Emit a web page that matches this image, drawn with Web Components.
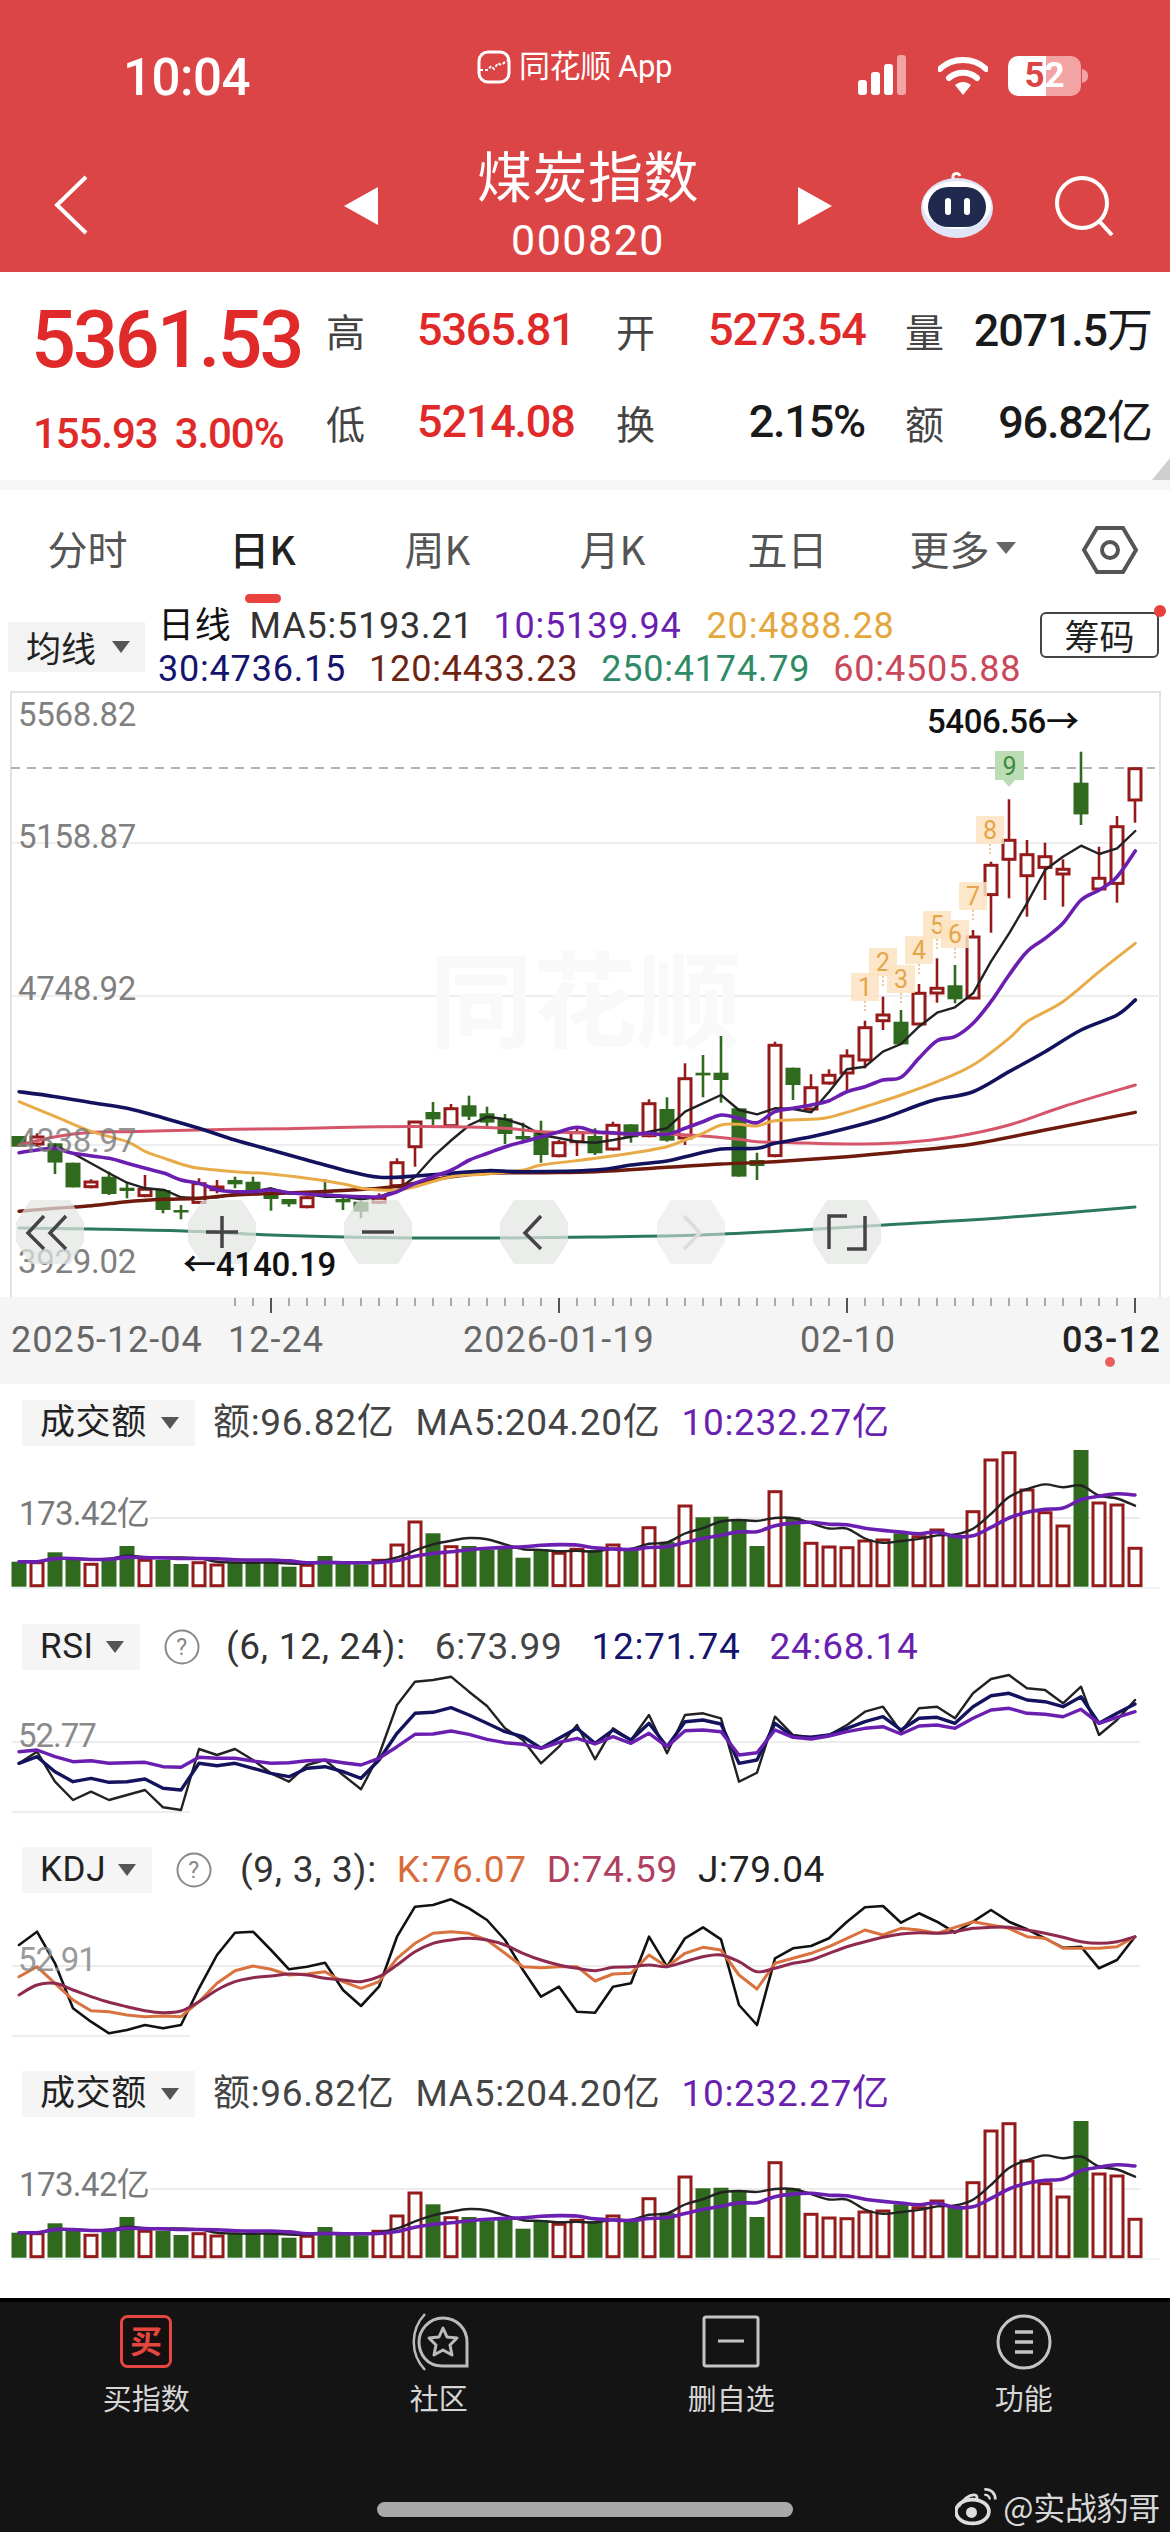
<!DOCTYPE html>
<html lang="zh">
<head>
<meta charset="utf-8">
<title>煤炭指数</title>
<style>
html,body{margin:0;padding:0;background:#fff}
body{width:1170px;height:2532px;overflow:hidden;font-family:Roboto,"Noto Sans CJK SC",sans-serif;color:#222}
</style>
</head>
<body>
<stock-header></stock-header>
<quote-panel></quote-panel>
<period-tabs></period-tabs>
<ma-legend></ma-legend>
<kline-chart></kline-chart>
<date-axis></date-axis>
<chart-pane pad="16" extra="0">
  <pane-head label="成交额" width="173">
    <span style="color:#444;margin-left:18px">额:96.82亿</span><span style="color:#444;margin-left:21px">MA5:204.20亿</span><span style="color:#6a1fb0;margin-left:21px">10:232.27亿</span>
  </pane-head>
  <volume-chart origin="1446"></volume-chart>
</chart-pane>
<chart-pane pad="24" extra="0">
  <pane-head label="RSI" width="118" help="1">
    <span style="color:#333;margin-left:26px">(6, 12, 24):</span><span style="color:#444;margin-left:29px">6:73.99</span><span style="color:#14146e;margin-left:29px">12:71.74</span><span style="color:#6a1fb0;margin-left:29px">24:68.14</span>
  </pane-head>
  <line-chart kind="rsi" origin="1670" h="152"></line-chart>
</chart-pane>
<chart-pane pad="25" extra="0">
  <pane-head label="KDJ" width="130" help="1">
    <span style="color:#333;margin-left:28px">(9, 3, 3):</span><span style="color:#d96b3a;margin-left:20px">K:76.07</span><span style="color:#b0405f;margin-left:20px">D:74.59</span><span style="color:#222;margin-left:20px">J:79.04</span>
  </pane-head>
  <line-chart kind="kdj" origin="1893" h="162"></line-chart>
</chart-pane>
<chart-pane pad="16" extra="27">
  <pane-head label="成交额" width="173">
    <span style="color:#444;margin-left:18px">额:96.82亿</span><span style="color:#444;margin-left:21px">MA5:204.20亿</span><span style="color:#6a1fb0;margin-left:21px">10:232.27亿</span>
  </pane-head>
  <volume-chart origin="1446"></volume-chart>
</chart-pane>
<bottom-bar></bottom-bar>
<script>
const CX=i=>19+18*i;
const z4=(x,y)=>[x/2.613,1000+y/3];
const z3=(x,y)=>[600+x/2.75,680+y/3];
const pts=(a,f)=>a.map(p=>f(p[0],p[1]));
const fmt=a=>a.map(p=>p[0].toFixed(1)+','+p[1].toFixed(1)).join(' ');
function smooth(p){
  let d='M'+p[0][0].toFixed(1)+' '+p[0][1].toFixed(1);
  for(let i=0;i<p.length-1;i++){
    const a=p[Math.max(0,i-1)],b=p[i],c=p[i+1],e=p[Math.min(p.length-1,i+2)];
    d+=` C${(b[0]+(c[0]-a[0])/6).toFixed(1)} ${(b[1]+(c[1]-a[1])/6).toFixed(1)} ${(c[0]-(e[0]-b[0])/6).toFixed(1)} ${(c[1]-(e[1]-b[1])/6).toFixed(1)} ${c[0].toFixed(1)} ${c[1].toFixed(1)}`;
  }
  return d;
}
const linePath=(p,c,w)=>`<path d="${smooth(p)}" fill="none" stroke="${c}" stroke-width="${w}" stroke-linejoin="round" stroke-linecap="round"/>`;
const polyLine=(p,c,w)=>`<polyline points="${fmt(p)}" fill="none" stroke="${c}" stroke-width="${w}" stroke-linejoin="round" stroke-linecap="round"/>`;
const GREEN='#2f6a1f',RED='#951b1b';

class StockHeader extends HTMLElement{
  constructor(){super();this.attachShadow({mode:'open'}).innerHTML=`
  <style>
  :host{display:block;height:272px;background:#dc4545;color:#fff;box-sizing:border-box;padding-top:50px;overflow:hidden}
  .status{display:flex;height:56px;align-items:center}
  .time{margin-left:123px;width:340px;font:500 51px/56px Roboto,sans-serif;letter-spacing:-.5px;color:#fff}
  .app{display:flex;align-items:center;width:222px;height:40px;margin-top:-22px;font:400 31px/40px Roboto,"Noto Sans CJK SC",sans-serif;color:#fff;white-space:nowrap;letter-spacing:-.4px}
  .app svg{margin:0 8px 0 14px;flex:none}
  .right{display:flex;align-items:center;margin-left:173px;margin-top:-4px}
  .bat{display:flex;width:73px;height:40px;border-radius:10px;background:linear-gradient(90deg,#fff 0 52%,#f2a3a3 52% 100%);font:700 35px/40px Roboto,sans-serif;justify-content:center;margin-left:20px}
  .bat b{color:#dc4545;font-weight:700}.bat i{color:#fff;font-style:normal}
  .nav{display:flex;align-items:flex-start;margin-top:36px;position:relative}
  .back{margin:33px 0 0 54px;flex:none}
  .tl{margin:45px 0 0 256px;flex:none}
  .mid{width:420px;text-align:center;flex:none;color:#fff}
  .name{font:400 55px/64px "Noto Sans CJK SC",sans-serif;letter-spacing:.5px;margin-top:-1px}
  .code{font:400 43px/48px Roboto,sans-serif;letter-spacing:1.5px;margin-top:11px;color:#fff}
  .tr{margin:45px 0 0 0;flex:none}
  .robot{margin:29px 0 0 88px;flex:none}
  .search{margin:34px 0 0 60px;flex:none}
  </style>
  <div class="status">
    <div class="time">10:04</div>
    <div class="app">
      <svg width="34" height="34" viewBox="0 0 34 34"><rect x="2" y="2" width="30" height="30" rx="9" fill="#dc4545" stroke="#fff" stroke-width="3"/><path d="M3 20h8l3-4 3 3 4-6 3 2 7-5" fill="none" stroke="#fff" stroke-width="2" stroke-dasharray="3 2"/></svg>
      <span>同花顺 App</span>
    </div>
    <div class="right">
      <svg width="58" height="42" viewBox="0 0 58 42"><rect x="0" y="25" width="9" height="15" rx="3" fill="#fff"/><rect x="13" y="17" width="9" height="23" rx="3" fill="#fff"/><rect x="26" y="9" width="9" height="31" rx="3" fill="#fff"/><rect x="39" y="0" width="9" height="40" rx="3" fill="#f2a3a3"/></svg>
      <svg width="50" height="42" viewBox="0 0 50 42" style="margin-left:22px"><path d="M2 14C14 2 36 2 48 14" fill="none" stroke="#fff" stroke-width="6" stroke-linecap="round"/><path d="M11 23c8-7 20-7 28 0" fill="none" stroke="#fff" stroke-width="6" stroke-linecap="round"/><path d="M17 30c5-4 11-4 16 0l-8 10z" fill="#fff"/></svg>
      <div class="bat"><b>5</b><i>2</i></div>
      <svg width="7" height="16" viewBox="0 0 7 16" style="margin-left:1px"><path d="M0 1c4 1 6 3 6 7s-2 6-6 7z" fill="#f2a3a3"/></svg>
    </div>
  </div>
  <div class="nav">
    <svg class="back" width="34" height="60" viewBox="0 0 34 60"><path d="M32 2 3 30l29 28" fill="none" stroke="#fff" stroke-width="4"/></svg>
    <svg class="tl" width="34" height="38" viewBox="0 0 34 38"><path d="M34 0v38L0 19z" fill="#fff"/></svg>
    <div class="mid"><div class="name">煤炭指数</div><div class="code">000820</div></div>
    <svg class="tr" width="34" height="38" viewBox="0 0 34 38"><path d="M0 0v38l34-19z" fill="#fff"/></svg>
    <svg class="robot" width="74" height="68" viewBox="0 0 74 68">
      <path d="M34 9c-4-6 4-9 6-4" fill="none" stroke="#fff" stroke-width="3"/>
      <ellipse cx="37" cy="37" rx="36" ry="30" fill="#dfe4f7"/>
      <ellipse cx="37" cy="34" rx="34" ry="24" fill="#fff"/>
      <rect x="8" y="16" width="58" height="40" rx="20" fill="#1f2a4e"/>
      <rect x="25" y="27" width="6" height="17" rx="3" fill="#fff"/><rect x="44" y="27" width="6" height="17" rx="3" fill="#fff"/>
    </svg>
    <svg class="search" width="62" height="60" viewBox="0 0 62 60"><circle cx="28" cy="27" r="25" fill="none" stroke="#fff" stroke-width="4"/><path d="M46 46l12 13" stroke="#fff" stroke-width="4" fill="none"/></svg>
  </div>`;}
}
class QuotePanel extends HTMLElement{
  constructor(){super();this.attachShadow({mode:'open'}).innerHTML=`
  <style>
  :host{display:block;position:relative;height:218px;box-sizing:border-box;padding-top:12px;background:linear-gradient(#fff 0 208px,#f6f6f6 208px)}
  .g{display:grid;grid-template-columns:326px 91px 199px 92px 157px 40px 68px 180px;grid-template-rows:92px 92px;align-items:center;white-space:nowrap}
  .lab{font:400 39px/46px "Noto Sans CJK SC",sans-serif;color:#444}
  .v{font:500 45px/50px Roboto,"Noto Sans CJK SC",sans-serif;letter-spacing:-1.2px}
  .r{color:#e02a2a}.k{color:#1a1a1a}.ra{text-align:right}
  .price{font:500 79px/80px Roboto,sans-serif;letter-spacing:-3px;color:#e02a2a;padding-left:31px;margin-top:20px}
  .sub{font:500 42px/46px Roboto,sans-serif;color:#e02a2a;padding-left:33px;margin-top:24px;letter-spacing:-1.1px;word-spacing:8px}
  .cn{font-size:46px;letter-spacing:0;font-weight:400}
  .tri{position:absolute;right:0;bottom:10px;width:0;height:0;border-left:18px solid transparent;border-bottom:22px solid #cfcfcf}
  </style>
  <div class="g">
    <div class="price">5361.53</div><div class="lab">高</div><div class="v r">5365.81</div><div class="lab">开</div><div class="v r ra">5273.54</div><div></div><div class="lab">量</div><div class="v k ra">2071.5<span class="cn">万</span></div>
    <div class="sub">155.93 3.00%</div><div class="lab">低</div><div class="v r">5214.08</div><div class="lab">换</div><div class="v k ra">2.15%</div><div></div><div class="lab">额</div><div class="v k ra">96.82<span class="cn">亿</span></div>
  </div>
  <div class="tri"></div>`;}
}
class PeriodTabs extends HTMLElement{
  constructor(){super();this.attachShadow({mode:'open'}).innerHTML=`
  <style>
  :host{display:grid;grid-template-columns:repeat(6,175px) 1fr;height:115px;box-sizing:border-box;padding-top:33px;background:#fff}
  .t{display:flex;flex-direction:column;align-items:center;font:400 40px/50px "Noto Sans CJK SC",Roboto,sans-serif;color:#555}
  .t.a{color:#222;font-weight:500}
  .t.a::after{content:"";width:36px;height:9px;border-radius:5px;background:#e8413e;margin-top:21px}
  .more{display:flex;align-items:center;gap:6px}
  .more i{width:0;height:0;border:10px solid transparent;border-top:12px solid #666;border-bottom:0}
  svg{justify-self:center;margin-top:2px}
  </style>
  <div class="t">分时</div><div class="t a">日K</div><div class="t">周K</div><div class="t">月K</div><div class="t">五日</div><div class="t"><span class="more">更多<i></i></span></div>
  <svg width="56" height="50" viewBox="0 0 56 50"><path d="M15 3h26l13 22-13 22H15L2 25z" fill="none" stroke="#555" stroke-width="4"/><circle cx="28" cy="25" r="8" fill="none" stroke="#555" stroke-width="4"/></svg>`;}
}
class MaLegend extends HTMLElement{
  constructor(){super();this.attachShadow({mode:'open'}).innerHTML=`
  <style>
  :host{display:flex;height:85px;position:relative;background:#fff;white-space:nowrap}
  .box{display:flex;align-items:center;width:137px;height:50px;margin:17px 13px 0 8px;box-sizing:border-box;padding-left:18px;background:#f3f3f3;font:400 35px/50px "Noto Sans CJK SC",sans-serif;color:#222}
  .box i{width:0;height:0;border:9px solid transparent;border-top:12px solid #555;border-bottom:0;margin-left:16px}
  .ls{flex:none;width:880px;font:400 36px/43px Roboto,"Noto Sans CJK SC",sans-serif;letter-spacing:.8px}
  .ls span{margin-right:23px}
  .btn{position:absolute;left:1040px;top:7px;width:119px;height:46px;box-sizing:border-box;border:2px solid #444;border-radius:6px;text-align:center;font:400 35px/41px "Noto Sans CJK SC",sans-serif;color:#222;background:#fff}
  .dot{position:absolute;left:1154px;top:0;width:12px;height:12px;border-radius:50%;background:#e8413e}
  </style>
  <div class="box">均线<i></i></div>
  <div class="ls">
    <div><span style="color:#111;margin-right:18px">日线</span><span style="color:#333;margin-right:20px">MA5:5193.21</span><span style="color:#6a1fb0;margin-right:25px">10:5139.94</span><span style="color:#e4a73c">20:4888.28</span></div>
    <div><span style="color:#14146e">30:4736.15</span><span style="color:#6e2410">120:4433.23</span><span style="color:#2f8a66">250:4174.79</span><span style="color:#c9485c">60:4505.88</span></div>
  </div>
  <div class="btn">筹码</div><div class="dot"></div>`;}
}
const CAND=[
[408,440,408,440,'g'],[408,435,400,440,'r'],[430,488,430,522,'g'],[488,562,488,562,'g'],[543,563,538,565,'r'],[530,582,515,585,'g'],[563,573,545,595,'g'],[565,590,525,592,'r'],[570,630,570,640,'g'],[630,635,615,658,'g'],
[548,610,535,612,'r'],[558,572,540,580,'r'],[540,553,530,565,'g'],[545,570,530,575,'g'],[575,597,565,632,'g'],[597,613,597,620,'g'],[590,623,588,625,'r'],[570,580,538,582,'g'],[597,607,590,630,'g'],[605,635,600,655,'g'],
[592,610,580,612,'r'],[485,560,475,565,'r'],[363,443,363,500,'r'],[336,358,306,375,'g'],[323,380,312,382,'r'],[316,350,287,360,'g'],[340,368,320,378,'g'],[355,402,342,432,'g'],[408,418,368,425,'g'],[398,465,362,488,'g'],
[425,470,420,472,'r'],[395,428,385,468,'r'],[408,460,385,465,'g'],
[1333,1410,1325,1412,'r'],[1333,1372,1333,1388,'g'],[1268,1370,1258,1372,'r'],[1287,1382,1252,1385,'g'],[1193,1377,1150,1395,'r'],[1178,1186,1125,1252,'g'],[1178,1200,1068,1268,'g'],[1285,1490,1285,1490,'g'],[1440,1458,1418,1500,'g'],
[1093,1430,1085,1432,'r'],[1163,1215,1163,1260,'g'],[1220,1290,1183,1292,'r'],[1183,1212,1168,1214,'r'],[1125,1182,1108,1230,'r'],[1040,1143,1022,1165,'r'],[1002,1025,950,1050,'r'],[1025,1093,990,1095,'g'],[937,1035,912,1036,'r'],
[922,942,835,968,'r'],[916,958,855,970,'g'],[768,957,750,958,'r'],[553,647,545,758,'r'],[478,541,358,655,'r'],[521,590,480,710,'r'],[527,565,488,660,'r'],[565,585,538,680,'r'],[308,403,215,435,'g'],[592,630,500,632,'r'],[437,613,408,668,'r'],[263,363,263,428,'r']];
const MA5=pts([[145,438],[190,460],[285,520],[332,548],[380,565],[430,570],[473,592],[520,595],[570,592],[614,582],[661,575],[708,565],[755,580],[802,582],[850,590],[897,590],[944,598],[991,590],[1038,570],[1085,530],[1132,470],[1180,420],[1227,375],[1274,350],[1321,358],[1368,375],[1415,405],[1462,415],[1509,425],[1556,428]],z4).concat(pts([[36,1380],[85,1370],[135,1355],[184,1345],[234,1295],[283,1270],[333,1245],[382,1290],[432,1303],[481,1285],[531,1287],[581,1297],[630,1235],[679,1168],[729,1160],[778,1115],[828,1092],[877,1040],[927,998],[976,982],[1026,940],[1075,845],[1125,760],[1174,670],[1224,570],[1273,530],[1323,497],[1373,522],[1422,505],[1472,453]],z3));
const MA10=pts([[50,458],[97,450],[144,445],[190,460],[285,475],[332,490],[380,505],[430,520],[473,540],[520,550],[570,570],[614,575],[661,575],[708,570],[755,578],[802,582],[850,585],[897,588],[944,590],[991,590],[1038,575],[1085,550],[1132,530],[1180,510],[1227,480],[1274,460],[1321,440],[1368,425],[1415,410],[1462,395],[1509,382],[1556,395]],z4).concat(pts([[36,1358],[85,1362],[135,1360],[184,1363],[234,1345],[283,1325],[333,1305],[382,1315],[432,1328],[481,1295],[531,1285],[581,1275],[630,1262],[679,1235],[729,1220],[778,1200],[828,1192],[877,1135],[927,1082],[976,1070],[1026,1030],[1075,965],[1125,885],[1174,815],[1224,775],[1273,730],[1323,660],[1373,630],[1422,590],[1472,513]],z3));
const MA20=pts([[50,305],[145,350],[240,395],[332,425],[380,455],[430,475],[473,492],[520,505],[614,515],[708,522],[802,535],[897,552],[944,565],[991,570],[1038,570],[1085,560],[1180,530],[1274,522],[1368,510],[1415,495],[1556,475]],z4).concat(pts([[85,1420],[184,1400],[234,1380],[283,1360],[333,1335],[382,1333],[432,1338],[481,1322],[581,1318],[630,1312],[729,1280],[828,1245],[927,1205],[1026,1155],[1125,1075],[1174,1025],[1273,965],[1373,875],[1472,790]],z3));
const MA30=pts([[50,275],[145,290],[240,308],[332,325],[430,355],[520,385],[614,420],[708,450],[802,480],[897,510],[991,532],[1085,528],[1180,520],[1274,512],[1368,515],[1556,510]],z4).concat(pts([[85,1455],[184,1443],[234,1430],[333,1407],[432,1405],[481,1390],[581,1370],[679,1345],[778,1315],[877,1275],[927,1258],[1026,1235],[1125,1175],[1224,1115],[1323,1050],[1422,1005],[1472,960]],z3));
const MA60=pts([[50,435],[145,410],[240,397],[332,395],[430,392],[614,388],[802,385],[991,380],[1180,380],[1321,385],[1415,395],[1556,398]],z4).concat(pts([[85,1362],[184,1362],[283,1368],[382,1378],[432,1385],[531,1388],[679,1392],[828,1388],[976,1370],[1125,1335],[1273,1280],[1472,1215]],z3));
const MA120=pts([[50,634],[145,625],[240,617],[332,605],[430,598],[520,595],[614,585],[802,577],[991,565],[1085,550],[1180,530],[1274,520],[1415,518],[1556,515]],z4).concat(pts([[184,1462],[333,1452],[481,1445],[679,1430],[828,1415],[1026,1392],[1224,1350],[1472,1297]],z3));
const MA250=[[19,1228],[92,1229],[184,1231],[271,1235],[343,1237],[413,1238],[497,1238],[595,1237],[700,1235],[800,1230],[900,1224],[1000,1218],[1135,1207]];
const BADGES=[[1,851,973],[2,869,948],[3,887,965],[4,905,936],[5,923,911],[6,941,920],[7,959,882],[8,976,816]];
class KlineChart extends HTMLElement{
  constructor(){super();
    let c='';
    CAND.forEach((d,i)=>{const f=i<33?(y=>1000+y/3):(y=>680+y/3);const x=CX(i);const col=d[4]=='r'?RED:GREEN;
      const t=f(d[0]),b=f(d[1]),wt=f(d[2]),wb=f(d[3]);
      c+=`<path d="M${x} ${wt.toFixed(1)}V${wb.toFixed(1)}" stroke="${col}" stroke-width="2.6"/>`;
      if(d[4]=='r')c+=`<rect x="${x-6}" y="${(t+1).toFixed(1)}" width="12" height="${Math.max(1,b-t-2).toFixed(1)}" fill="#fff" stroke="${col}" stroke-width="3"/>`;
      else c+=`<rect x="${x-7.5}" y="${t.toFixed(1)}" width="15" height="${Math.max(2.5,b-t).toFixed(1)}" fill="${col}"/>`;
    });
    let bd='';
    BADGES.forEach(([n,x,y])=>{bd+=`<rect x="${x}" y="${y}" width="28" height="28" fill="#fbe3c2" opacity=".85"/><path d="M${x+14} ${y+28}V${y+40}" stroke="#e8c9a0" stroke-dasharray="2 2" stroke-width="2"/><text x="${x+14}" y="${y+23}" text-anchor="middle" font-size="25" fill="#e5a54a">${n}</text>`;});
    bd+=`<rect x="995" y="751" width="29" height="29" fill="#bcdcb6"/><path d="M1003 780l6 7 6-7z" fill="#bcdcb6"/><text x="1009.5" y="775" text-anchor="middle" font-size="25" fill="#3c8a3c">9</text>`;
    const gl=y=>`<line x1="11" x2="1160" y1="${y}" y2="${y}" stroke="#eeeeee" stroke-width="2"/>`;
    const lab=(t,y)=>`<text x="18" y="${y}" font-size="33" fill="#808080" letter-spacing="-.3">${t}</text>`;
    const btn=(x,icon,f)=>`<path d="M${x-34} ${1222}L${x-20} ${1200}L${x+20} ${1200}L${x+34} ${1222}V${1242}L${x+20} ${1264}L${x-20} ${1264}L${x-34} ${1242}Z" fill="#e3e6e3" opacity="${f||.72}"/>${icon}`;
    const st='fill="none" stroke="#444" stroke-width="3.5"';
    this.attachShadow({mode:'open'}).innerHTML=`
    <style>:host{display:block;height:607px;background:#fff}svg{display:block;font-family:Roboto,"Noto Sans CJK SC",sans-serif}</style>
    <svg width="1170" height="607" viewBox="0 690 1170 607">
      <path d="M11 1297V692H1160V1297" fill="none" stroke="#e2e2e2" stroke-width="2"/>
      ${gl(843)}${gl(996)}${gl(1145)}
      <line x1="11" x2="1155" y1="768" y2="768" stroke="#9a9a9a" stroke-width="1.5" stroke-dasharray="9 7"/>
      <text x="585" y="1040" text-anchor="middle" font-size="104" font-weight="700" fill="#f9f9f9">同花顺</text>
      ${c}
      ${polyLine(MA5,'#222',2.4)}
      ${linePath(MA250,'#2b7a5c',3)}
      ${linePath(MA120,'#6e1a0c',3.4)}
      ${linePath(MA60,'#d5566a',3)}
      ${linePath(MA20,'#e9ab48',3)}
      ${linePath(MA30,'#12125e',3.6)}
      ${linePath(MA10,'#6a1fb0',3.6)}
      ${bd}
      ${lab('5568.82',726)}${lab('5158.87',848)}${lab('4748.92',1000)}
      <text x="18" y="1152" font-size="33" fill="#7a7a7a" opacity=".8" letter-spacing="-.3">4338.97</text>
      ${lab('3929.02',1273)}
      <text x="927" y="733" font-size="33" font-weight="500" fill="#111" letter-spacing="-.4">5406.56→</text>
      ${btn(50,`<path d="M44 1216l-16 17 16 16M66 1216l-16 17 16 16" ${st}/>`)}
      ${btn(222,`<path d="M222 1216v32M206 1232h32" ${st}/>`)}
      ${btn(378,`<path d="M362 1232h32" ${st}/>`)}
      ${btn(534,`<path d="M541 1216l-16 17 16 16" ${st}/>`)}
      ${btn(691,`<path d="M684 1216l16 17-16 16" fill="none" stroke="#dcdcdc" stroke-width="3.5"/>`,.55)}
      ${btn(847,`<path d="M829 1249v-33h18M865 1216v33h-18" ${st}/>`,.72)}
      <text x="183" y="1276" font-size="33" font-weight="500" fill="#111" letter-spacing="-.2">←4140.19</text>
    </svg>`;
  }
}
class DateAxis extends HTMLElement{
  constructor(){super();
    let t='';
    for(let i=12;i<=62;i++){const big=(i-14)%16==0;const x=CX(i);t+=`<line x1="${x}" x2="${x}" y1="1298" y2="${big?1313:1306}" stroke="${big?'#555':'#aaa'}" stroke-width="2"/>`;}
    const d=(s,x,c,w)=>`<text x="${x}" y="1352" font-size="36" fill="${c||'#666'}" ${w?'font-weight="500"':''} letter-spacing="1">${s}</text>`;
    this.attachShadow({mode:'open'}).innerHTML=`
    <style>:host{display:block;height:87px;background:#f5f5f5}svg{display:block;font-family:Roboto,sans-serif}</style>
    <svg width="1170" height="87" viewBox="0 1297 1170 87">${t}
      ${d('2025-12-04',11)}${d('12-24',228)}${d('2026-01-19',463)}${d('02-10',800)}${d('03-12',1062,'#222',1)}
      <circle cx="1110" cy="1362" r="5" fill="#e8605c"/>
    </svg>`;
  }
}
class ChartPane extends HTMLElement{
  constructor(){super();this.attachShadow({mode:'open'}).innerHTML=`<style>:host{display:block;background:#fff}</style><slot></slot>`;}
  connectedCallback(){this.style.paddingTop=(this.getAttribute('pad')||0)+'px';this.style.paddingBottom=(this.getAttribute('extra')||0)+'px';}
}
class PaneHead extends HTMLElement{
  constructor(){super();
    const help=this.getAttribute('help');
    this.attachShadow({mode:'open'}).innerHTML=`
    <style>
    :host{display:flex;align-items:center;height:46px;white-space:nowrap;font:400 37px/46px Roboto,"Noto Sans CJK SC",sans-serif;letter-spacing:.7px}
    .box{display:flex;align-items:center;justify-content:space-between;box-sizing:border-box;width:${this.getAttribute('width')}px;height:46px;margin-left:22px;padding:0 16px 0 18px;background:#f5f5f5;color:#222;flex:none;font-size:35px;letter-spacing:.6px}
    .box i{width:0;height:0;border:9px solid transparent;border-top:12px solid #555;border-bottom:0}
    svg{margin-left:24px;flex:none}
    </style>
    <div class="box"><span>${this.getAttribute('label')}</span><i></i></div>
    ${help?`<svg width="36" height="36" viewBox="0 0 36 36"><circle cx="18" cy="18" r="16.5" fill="none" stroke="#888" stroke-width="2"/><text x="18" y="26" text-anchor="middle" font-size="23" fill="#888" font-family="Roboto">?</text></svg>`:''}
    <slot></slot>`;
  }
}
const VOL=[[545,'g'],[545,'r'],[517,'g'],[535,'g'],[550,'r'],[535,'g'],[498,'g'],[538,'r'],[540,'g'],[552,'g'],[545,'r'],[552,'r'],[548,'g'],[545,'g'],[548,'g'],[560,'g'],[553,'r'],[528,'g'],[550,'g'],[553,'g'],[538,'r'],[492,'r'],[423,'r'],[460,'g'],[497,'r'],[498,'g'],[510,'g'],[500,'g'],[533,'g'],[508,'g'],[517,'r'],[505,'r'],[510,'g'],[492,'r'],[510,'g'],[440,'r'],[485,'g'],[375,'r'],[412,'g'],[410,'g'],[418,'g'],[498,'g'],[332,'r'],[412,'g'],[487,'r'],[498,'r'],[500,'r'],[480,'r'],[477,'r'],[460,'g'],[467,'r'],[447,'r'],[465,'g'],[392,'r'],[237,'r'],[215,'r'],[327,'r'],[395,'r'],[435,'r'],[210,'g'],[366,'r'],[372,'r'],[502,'r']];
class VolumeChart extends HTMLElement{
  constructor(){super();
    const Y=z=>1380+z/3;
    let b='';
    VOL.forEach(([t,k],i)=>{const x=CX(i);
      b+=k=='g'?`<rect x="${x-7.5}" y="${Y(t).toFixed(1)}" width="15" height="${(Y(620)-Y(t)).toFixed(1)}" fill="${GREEN}"/>`
              :`<rect x="${x-6}" y="${(Y(t)+1).toFixed(1)}" width="12" height="${(Y(620)-Y(t)-2).toFixed(1)}" fill="#fff" stroke="${RED}" stroke-width="3"/>`;});
    const ma=n=>VOL.map((_,i)=>{let s=0,c=0;for(let j=Math.max(0,i-n+1);j<=i;j++){s+=VOL[j][0];c++;}return [CX(i),Y(s/c)];});
    this.attachShadow({mode:'open'}).innerHTML=`
    <style>:host{display:block;height:154px}svg{display:block;font-family:Roboto,"Noto Sans CJK SC",sans-serif}</style>
    <svg width="1170" height="154" viewBox="0 1446 1170 154">
      <line x1="150" x2="1140" y1="1518" y2="1518" stroke="#ececec" stroke-width="2"/>
      <line x1="12" x2="1160" y1="1588" y2="1588" stroke="#eef4f4" stroke-width="2"/>
      ${b}
      ${linePath(ma(5),'#222',2.4)}
      ${linePath(ma(10),'#6a1fb0',3.6)}
      <text x="19" y="1525" font-size="33" fill="#7a7a7a" letter-spacing="-.6">173.42亿</text>
    </svg>`;
  }
}
const RSI={
 a:[490,455,545,600,575,600,585,570,622,630,447,465,447,480,520,545,495,480,525,568,465,315,245,240,230,275,318,385,420,490,440,375,478,385,420,345,460,345,340,355,545,518,350,405,412,405,375,335,320,395,325,320,355,280,237,225,265,270,310,260,405,360,300],
 b:[490,470,515,545,535,547,545,537,565,570,490,497,490,505,520,530,505,500,515,535,480,400,340,337,323,345,370,395,410,445,415,385,430,390,420,370,440,365,360,372,490,480,370,410,412,405,385,365,350,390,355,352,370,320,287,280,300,305,320,290,370,340,312],
 c:[455,450,470,485,482,490,488,487,500,502,472,475,475,483,490,488,482,480,488,495,475,440,403,402,393,403,418,428,433,445,427,415,432,410,430,400,440,392,390,395,465,458,390,412,417,408,395,385,380,402,378,375,385,355,330,325,340,343,350,328,370,352,335]};
const KDJ={
 j:[1035,995,1090,1225,1265,1300,1290,1275,1285,1275,1165,1065,998,995,1050,1108,1100,1088,1170,1218,1160,1010,920,915,898,925,960,1020,1110,1190,1160,1235,1238,1160,1150,1010,1100,1015,982,1018,1215,1275,1075,1045,1038,1015,965,922,918,968,940,965,998,965,930,965,988,1015,1043,1040,1105,1080,1010],
 k:[1130,1100,1150,1200,1232,1235,1245,1250,1248,1250,1205,1150,1112,1098,1108,1125,1122,1115,1145,1165,1145,1075,1030,1000,995,1000,1020,1060,1100,1103,1100,1100,1143,1122,1120,1065,1100,1060,1042,1050,1125,1167,1090,1075,1060,1040,1015,990,1005,985,990,1000,982,965,975,985,1010,1015,1045,1045,1045,1040,1010],
 d:[1185,1155,1150,1170,1190,1207,1220,1232,1238,1233,1205,1170,1145,1133,1128,1122,1125,1135,1140,1145,1130,1095,1055,1030,1020,1015,1020,1035,1060,1080,1095,1105,1112,1102,1100,1095,1100,1085,1070,1065,1085,1115,1105,1090,1080,1060,1040,1025,1012,1002,998,1000,995,985,982,982,990,1000,1012,1025,1030,1025,1010]};
class LineChart extends HTMLElement{
  constructor(){super();
    const kind=this.getAttribute('kind'),o=+this.getAttribute('origin'),h=+this.getAttribute('h');
    const P=a=>a.map((z,i)=>[CX(i),1600+z/3]);
    let body;
    const line=(y,a,b)=>`<line x1="${a||12}" x2="${b||1140}" y1="${y}" y2="${y}" stroke="#ededed" stroke-width="2"/>`;
    if(kind=='rsi'){
      body=line(1742)+line(1812,12,190)+
        polyLine(P(RSI.a),'#222',2.4)+polyLine(P(RSI.b),'#14145e',3.4)+polyLine(P(RSI.c),'#6a1fb0',3.4)+
        `<text x="18" y="1747" font-size="33" fill="#8a8a8a" letter-spacing="-1">52.77</text>`;
    }else{
      body=line(1966)+line(2036,12,190)+
        polyLine(P(KDJ.j),'#111',2.6)+polyLine(P(KDJ.k),'#d9723f',3)+linePath(P(KDJ.d),'#8e2a4f',3)+
        `<text x="18" y="1971" font-size="33" fill="#8a8a8a" opacity=".85" letter-spacing="-1">52.91</text>`;
    }
    this.attachShadow({mode:'open'}).innerHTML=`
    <style>:host{display:block;height:${h}px}svg{display:block;font-family:Roboto,sans-serif}</style>
    <svg width="1170" height="${h}" viewBox="0 ${o} 1170 ${h}">${body}</svg>`;
  }
}
class BottomBar extends HTMLElement{
  constructor(){super();this.attachShadow({mode:'open'}).innerHTML=`
  <style>
  :host{display:block;position:relative;height:234px;box-sizing:border-box;background:#141414;border-top:4px solid #000;color:#ddd}
  .row{display:grid;grid-template-columns:repeat(4,292.5px);padding-top:11px}
  .it{display:flex;flex-direction:column;align-items:center;font:400 29px/38px "Noto Sans CJK SC",sans-serif;color:#d6d6d6}
  .it svg{display:block;height:58px;margin-bottom:7px}
  .home{width:416px;height:15px;border-radius:8px;background:#a9a9a9;margin:86px 0 0 377px}
  .wm{position:absolute;right:10px;top:184px;display:flex;align-items:center;font:400 32px/40px "Noto Sans CJK SC",sans-serif;color:#d8d8d8;letter-spacing:-.3px}
  </style>
  <div class="row">
    <div class="it"><svg width="54" height="58" viewBox="0 0 54 58"><rect x="2.5" y="3.5" width="49" height="50" rx="6" fill="#161010" stroke="#e5463f" stroke-width="3"/><text x="27" y="40" text-anchor="middle" font-size="32" font-weight="700" font-family="Noto Sans CJK SC" fill="#e5463f">买</text></svg><span>买指数</span></div>
    <div class="it"><svg width="64" height="58" viewBox="0 0 64 58"><path d="M18 1C3 17 3 41 18 57" fill="none" stroke="#bbb" stroke-width="2.5"/><path d="M60 53H35C20 53 12 41 12 29S22 5 36 5s24 11 24 24z" fill="none" stroke="#bbb" stroke-width="3"/><path d="M36 15l4 9 10 1-7 7 2 10-9-5-9 5 2-10-7-7 10-1z" fill="none" stroke="#bbb" stroke-width="3" stroke-linejoin="round"/></svg><span>社区</span></div>
    <div class="it"><svg width="58" height="58" viewBox="0 0 58 58"><rect x="2" y="4" width="54" height="49" rx="2" fill="none" stroke="#c4c4c4" stroke-width="3"/><path d="M16 28h26" stroke="#c4c4c4" stroke-width="3"/></svg><span>删自选</span></div>
    <div class="it"><svg width="58" height="58" viewBox="0 0 58 58"><ellipse cx="29" cy="29" rx="26" ry="26" fill="none" stroke="#c4c4c4" stroke-width="3"/><path d="M20 19h18M20 29h18M20 39h18" stroke="#c4c4c4" stroke-width="3.5"/></svg><span>功能</span></div>
  </div>
  <div class="home"></div>
  <div class="wm">
    <svg width="44" height="40" viewBox="0 0 48 42" style="margin-right:4px"><path d="M32 3c7-1 12 4 12 11" fill="none" stroke="#ddd" stroke-width="3"/><path d="M32 9c3-1 6 2 6 5" fill="none" stroke="#ddd" stroke-width="2.5"/><ellipse cx="19" cy="27" rx="18" ry="13" fill="none" stroke="#ddd" stroke-width="4"/><circle cx="18" cy="28" r="6" fill="#ddd"/><path d="M4 22C8 14 16 8 22 9c3 1 2 5 1 7" fill="none" stroke="#ddd" stroke-width="3"/></svg>
    <span>@实战豹哥</span>
  </div>`;}
}
customElements.define('stock-header',StockHeader);
customElements.define('quote-panel',QuotePanel);
customElements.define('period-tabs',PeriodTabs);
customElements.define('ma-legend',MaLegend);
customElements.define('kline-chart',KlineChart);
customElements.define('date-axis',DateAxis);
customElements.define('pane-head',PaneHead);
customElements.define('chart-pane',ChartPane);
customElements.define('volume-chart',VolumeChart);
customElements.define('line-chart',LineChart);
customElements.define('bottom-bar',BottomBar);
</script>
</body>
</html>
